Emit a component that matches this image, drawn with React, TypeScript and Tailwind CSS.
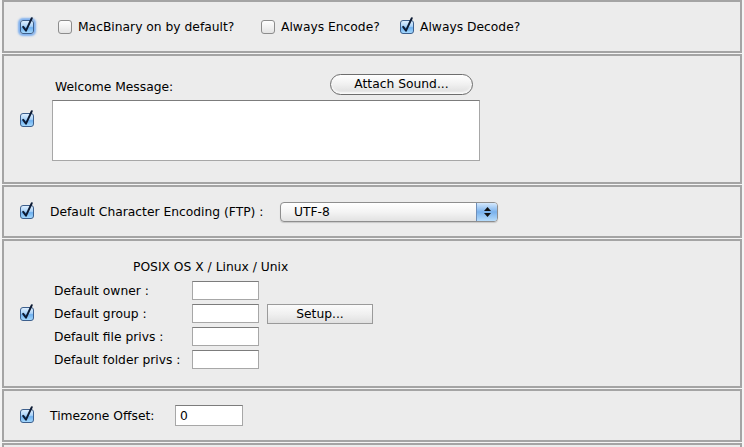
import { useId } from "react";

const Check = ({ checked = false, focus = false }: { checked?: boolean; focus?: boolean }) => {
  const id = useId();
  return (
    <div
      className={`w-[14px] h-[14px] shrink-0 rounded-[3px] ${
        focus ? "shadow-[0_0_2px_2px_#7fb0ee]" : ""
      }`}
    >
      <svg width="14" height="14" viewBox="0 0 14 14" className="overflow-visible">
        <defs>
          <linearGradient id={id} x1="0" y1="0" x2="0" y2="1">
            {checked ? (
              <>
                <stop offset="0" stopColor="#e2f1ff" />
                <stop offset="0.45" stopColor="#a9d2f8" />
                <stop offset="0.55" stopColor="#6eb0ef" />
                <stop offset="1" stopColor="#a9dcff" />
              </>
            ) : (
              <>
                <stop offset="0" stopColor="#ffffff" />
                <stop offset="0.5" stopColor="#f1f1f1" />
                <stop offset="1" stopColor="#e2e2e2" />
              </>
            )}
          </linearGradient>
        </defs>
        <rect
          x="0.5"
          y="0.5"
          width="13"
          height="13"
          rx="2.5"
          fill={`url(#${id})`}
          stroke={checked ? "#3d5f8c" : "#8c8c8c"}
        />
        {checked && (
          <path
            d="M3.2 6.8 L6 10.6 L11.8 -1.8"
            fill="none"
            stroke="#0c1a33"
            strokeWidth="2"
            strokeLinecap="round"
            strokeLinejoin="round"
          />
        )}
      </svg>
    </div>
  );
};

const Field = ({ className = "", value = "" }: { className?: string; value?: string }) => (
  <div
    className={`bg-white border border-[#a7a7a7] border-t-[#7c7c7c] flex items-center pl-[4px] ${className}`}
  >
    {value}
  </div>
);

const Panel = ({ className = "", children }: { className?: string; children?: React.ReactNode }) => (
  <div
    className={`ml-[2px] w-[740px] shrink-0 border-2 border-[#a4a4a4] bg-[#ececec] flex items-center pl-[16px] ${className}`}
  >
    {children}
  </div>
);

export default function App() {
  return (
    <div className="w-[744px] h-[447px] overflow-hidden bg-[#f4f4f4] flex flex-col gap-[1px] font-['DejaVu_Sans',sans-serif] text-[12.3px] text-black leading-[14px]">
      {/* MacBinary */}
      <Panel className="h-[53px]">
        <Check checked focus />
        <div className="ml-[24px] w-[203px] flex items-center gap-[6px]">
          <Check />
          <span>MacBinary on by default?</span>
        </div>
        <div className="w-[139px] flex items-center gap-[6px]">
          <Check />
          <span>Always Encode?</span>
        </div>
        <div className="flex items-center gap-[6px]">
          <Check checked />
          <span>Always Decode?</span>
        </div>
      </Panel>

      {/* Welcome message */}
      <Panel className="h-[130px]">
        <div className="mt-[2px]">
          <Check checked />
        </div>
        <div className="ml-[18px] mb-[3px] w-[428px] flex flex-col">
          <div className="flex items-end justify-between pr-[7px]">
            <span className="pl-[3px] mb-[1px]">Welcome Message:</span>
            <button className="w-[143px] h-[21px] rounded-full border border-[#6e6e6e] bg-gradient-to-b from-white via-[#f0f0f0] to-[#dcdcdc] text-[12.3px] leading-[18px] pb-[2px] shadow-[inset_0_-2px_2px_#fafafa]">
              Attach Sound...
            </button>
          </div>
          <div className="mt-[5px] h-[61px] bg-white border border-[#a7a7a7] border-t-[#7c7c7c]" />
        </div>
      </Panel>

      {/* Encoding */}
      <Panel className="h-[53px]">
        <Check checked />
        <span className="ml-[16px] w-[230px]">Default Character Encoding (FTP) :</span>
        <div className="w-[218px] h-[20px] rounded-[4px] border border-[#8e8e8e] bg-gradient-to-b from-white via-[#f4f4f4] to-[#e2e2e2] flex items-center shadow-[0_1px_1px_#c8c8c8]">
          <span className="pl-[13px] flex-1">UTF-8</span>
          <div className="w-[21px] h-full rounded-r-[3px] border-l border-[#6f8fb9] bg-gradient-to-b from-[#d5e9fd] via-[#79b1ec] to-[#b6dcfb] flex flex-col items-center justify-center gap-[2px]">
            <svg width="7" height="4" viewBox="0 0 7 4">
              <path d="M3.5 0 L7 4 L0 4 Z" fill="#111" />
            </svg>
            <svg width="7" height="4" viewBox="0 0 7 4">
              <path d="M0 0 L7 0 L3.5 4 Z" fill="#111" />
            </svg>
          </div>
        </div>
      </Panel>

      {/* POSIX */}
      <Panel className="h-[149px]">
        <Check checked />
        <div className="ml-[20px] flex flex-col">
          <div className="pl-[79px] h-[14px] mt-[2px] mb-[7px]">POSIX OS X / Linux / Unix</div>
          <div className="flex flex-col gap-[4px]">
            <div className="flex items-center h-[19px]">
              <span className="w-[138px]">Default owner :</span>
              <Field className="w-[67px] h-[19px]" />
            </div>
            <div className="flex items-center h-[19px]">
              <span className="w-[138px]">Default group :</span>
              <Field className="w-[67px] h-[19px]" />
              <button className="ml-[8px] w-[106px] h-[20px] border border-[#9a9a9a] bg-gradient-to-b from-[#fbfbfb] via-[#f0f0f0] to-[#e0e0e0] text-[12.3px] leading-[18px]">
                Setup...
              </button>
            </div>
            <div className="flex items-center h-[19px]">
              <span className="w-[138px]">Default file privs :</span>
              <Field className="w-[67px] h-[19px]" />
            </div>
            <div className="flex items-center h-[19px]">
              <span className="w-[138px]">Default folder privs :</span>
              <Field className="w-[67px] h-[19px]" />
            </div>
          </div>
        </div>
      </Panel>

      {/* Timezone */}
      <Panel className="h-[53px]">
        <Check checked />
        <span className="ml-[16px] w-[125px]">Timezone Offset:</span>
        <Field className="w-[68px] h-[21px]" value="0" />
      </Panel>

      <Panel className="h-[20px]" />
    </div>
  );
}
